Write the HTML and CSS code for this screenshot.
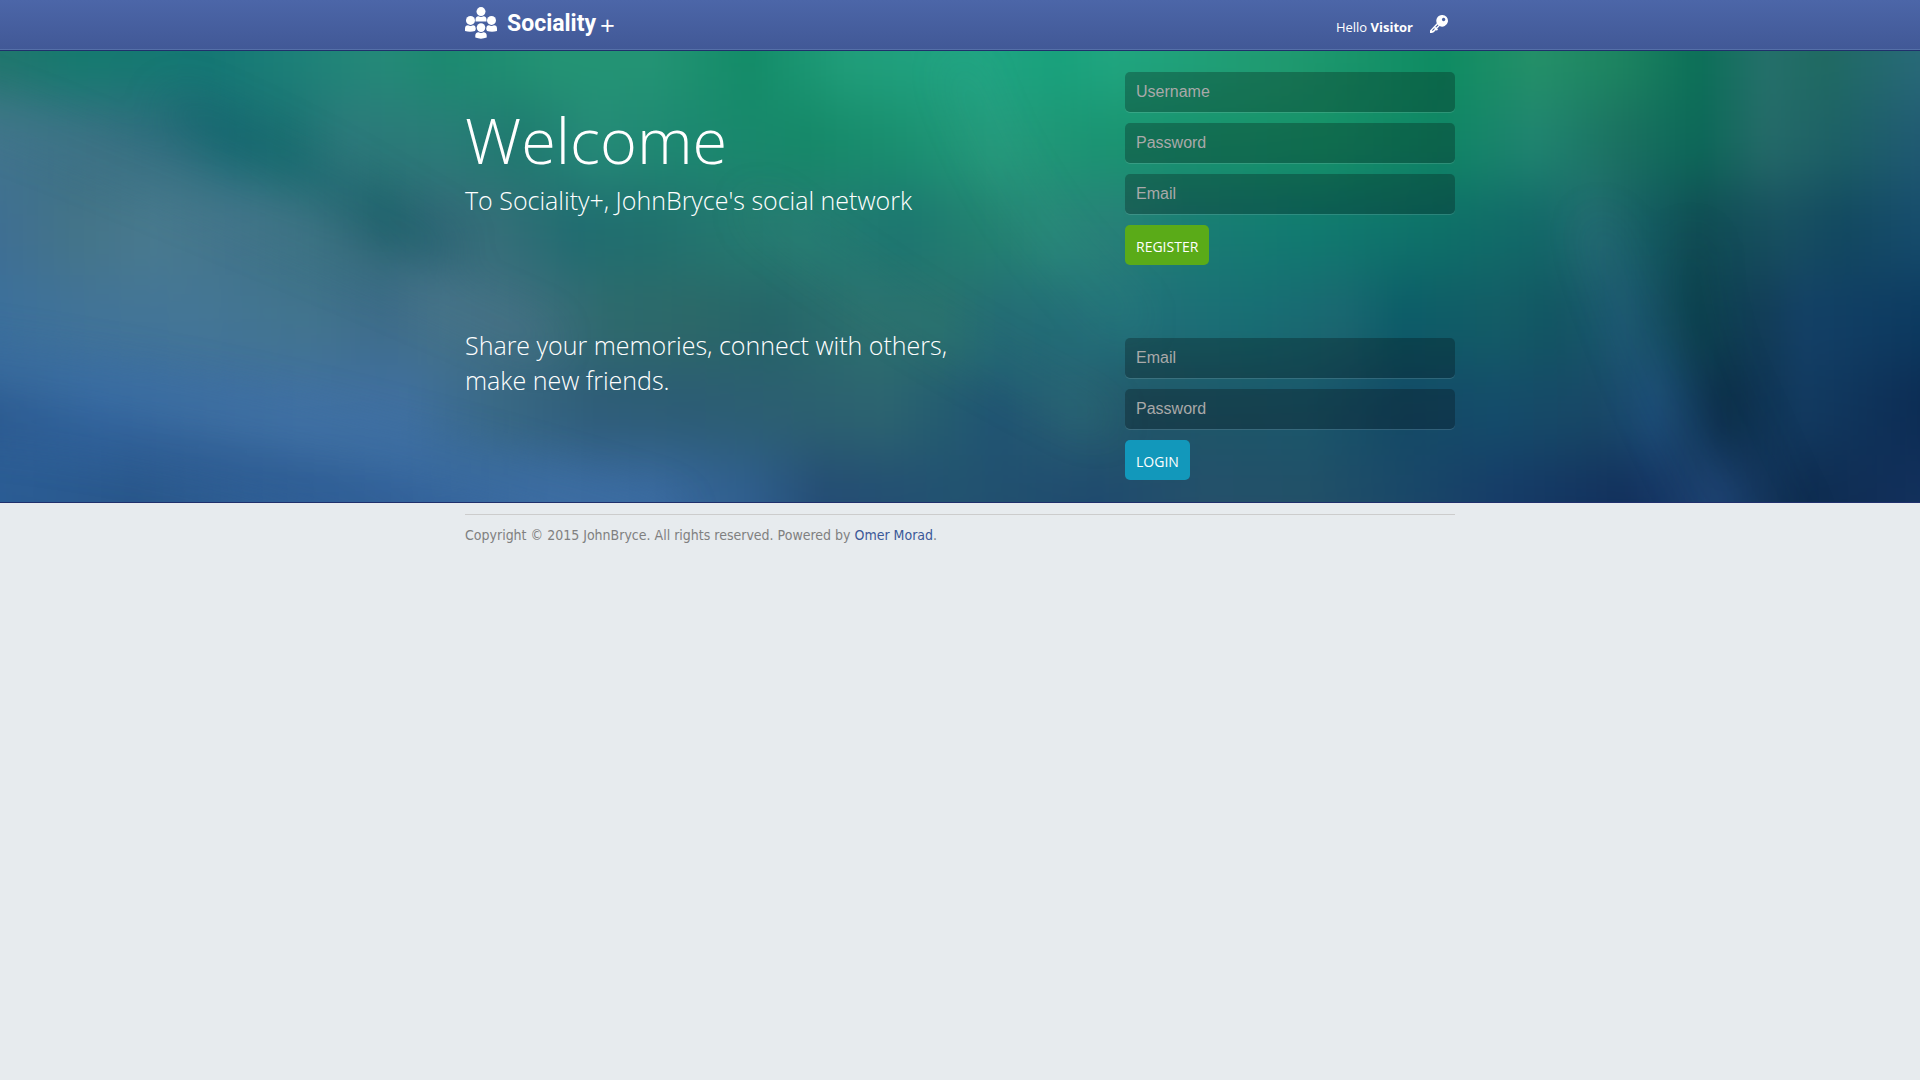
FILE: index.html
```html
<!DOCTYPE html>
<html lang="en">
<head>
<meta charset="utf-8">
<meta name="viewport" content="width=device-width, initial-scale=1">
<title>Sociality+</title>
<link rel="stylesheet" href="styles.css">
</head>
<body>
<header class="topbar">
  <div class="container topbar-inner">
    <a class="brand" href="#">
      <svg class="brand-icon" viewBox="0 0 32 32" aria-hidden="true">
        <circle cx="16" cy="4.600" r="4.500"/>
        <path d="M10.500 14.500V12.500Q10.500 9.500 13.500 9.300Q16 10.800 18.500 9.300Q21.500 9.500 21.500 12.500V14.500Z"/>
        <circle cx="5.500" cy="13.400" r="4.500"/>
        <path d="M0 23V21.500Q0 18.300 3 18.200Q5.500 19.600 8 18.200Q9.500 18.300 10.300 19.500Q11.500 22 10 24Q5 25.600 0 24Z"/>
        <circle cx="26.500" cy="13.400" r="4.500"/>
        <path d="M32 23V21.500Q32 18.300 29 18.200Q26.500 19.600 24 18.200Q22.500 18.300 21.700 19.500Q20.500 22 22 24Q27 25.600 32 24Z"/>
        <circle cx="16" cy="20.600" r="4.300"/>
        <path d="M10.300 30.500V28.500Q10.300 25.500 13.500 25.200Q16 26.800 18.500 25.200Q21.700 25.500 21.700 28.500V30.500Q16 32.800 10.300 30.500Z"/>
      </svg>
      <span class="brand-name">Sociality</span>
      <span class="brand-plus">+</span>
    </a>
    <div class="account">
      <span>Hello <b>Visitor</b></span>
      <a class="key" href="#login" aria-label="Log in">
        <svg viewBox="0 0 18 18" aria-hidden="true">
          <path fill-rule="evenodd" d="M12 0A5.800 5.800 0 1 1 9.600 11L4.800 16.200Q3.500 18 1.500 18H0V15.400L6.800 8.200A5.800 5.800 0 0 1 12 0ZM13.600 2.800A1.700 1.700 0 1 0 13.610 2.800ZM7.700 9.500L2 15.300L2.700 16L8.500 10.200Z"/>
          <path d="M5 11.500L8 14.500L6.800 15.700L4 13Z"/>
        </svg>
      </a>
    </div>
  </div>
</header>

<main class="hero">
  <svg class="backdrop" viewBox="0 51 1920 451" preserveAspectRatio="none" aria-hidden="true">
    <defs>
      <filter id="soft" filterUnits="userSpaceOnUse" x="-200" y="-200" width="2320" height="1000" color-interpolation-filters="sRGB"><feGaussianBlur stdDeviation="8 30"/></filter>
      <filter id="streak" filterUnits="userSpaceOnUse" x="-200" y="-200" width="2320" height="1000" color-interpolation-filters="sRGB"><feGaussianBlur stdDeviation="20"/></filter>
      <linearGradient id="r1" gradientUnits="userSpaceOnUse" x1="0" y1="0" x2="1920" y2="0">
        <stop offset="0" stop-color="#1f766c"/><stop offset=".04" stop-color="#147a6e"/><stop offset=".11" stop-color="#147874"/><stop offset=".15" stop-color="#1c8078"/><stop offset=".2" stop-color="#248a78"/><stop offset=".23" stop-color="#1b8a70"/><stop offset=".29" stop-color="#239474"/><stop offset=".34" stop-color="#239474"/><stop offset=".39" stop-color="#138c68"/><stop offset=".44" stop-color="#209e7a"/><stop offset=".51" stop-color="#20a583"/><stop offset=".55" stop-color="#18a27c"/><stop offset=".58" stop-color="#20a680"/><stop offset=".67" stop-color="#209a70"/><stop offset=".75" stop-color="#0e8c62"/><stop offset=".8" stop-color="#249068"/><stop offset=".845" stop-color="#1c8460"/><stop offset=".885" stop-color="#0c7058"/><stop offset=".92" stop-color="#24706a"/><stop offset=".95" stop-color="#1f6a62"/><stop offset="1" stop-color="#286a78"/>
      </linearGradient>
      <linearGradient id="r2" gradientUnits="userSpaceOnUse" x1="0" y1="0" x2="1920" y2="0">
        <stop offset="0" stop-color="#41748c"/><stop offset=".05" stop-color="#386f82"/><stop offset=".09" stop-color="#2d6c7c"/><stop offset=".12" stop-color="#1c6c74"/><stop offset=".15" stop-color="#1c7072"/><stop offset=".18" stop-color="#2c787a"/><stop offset=".23" stop-color="#2a7c78"/><stop offset=".27" stop-color="#1f7a70"/><stop offset=".31" stop-color="#258a78"/><stop offset=".36" stop-color="#1c8870"/><stop offset=".42" stop-color="#158868"/><stop offset=".47" stop-color="#1a9070"/><stop offset=".52" stop-color="#259a7c"/><stop offset=".57" stop-color="#1a9472"/><stop offset=".69" stop-color="#159268"/><stop offset=".75" stop-color="#0f8565"/><stop offset=".8" stop-color="#208470"/><stop offset=".845" stop-color="#1a7060"/><stop offset=".885" stop-color="#0c6858"/><stop offset=".92" stop-color="#246a68"/><stop offset=".96" stop-color="#1c6066"/><stop offset="1" stop-color="#205a72"/>
      </linearGradient>
      <linearGradient id="r3" gradientUnits="userSpaceOnUse" x1="0" y1="0" x2="1920" y2="0">
        <stop offset="0" stop-color="#3f6f92"/><stop offset=".04" stop-color="#447488"/><stop offset=".08" stop-color="#497a8e"/><stop offset=".12" stop-color="#42748a"/><stop offset=".16" stop-color="#387080"/><stop offset=".2" stop-color="#286470"/><stop offset=".23" stop-color="#346878"/><stop offset=".26" stop-color="#346e78"/><stop offset=".3" stop-color="#206c70"/><stop offset=".34" stop-color="#20706e"/><stop offset=".39" stop-color="#257a70"/><stop offset=".42" stop-color="#267c72"/><stop offset=".47" stop-color="#1c7670"/><stop offset=".51" stop-color="#228070"/><stop offset=".55" stop-color="#288678"/><stop offset=".58" stop-color="#288078"/><stop offset=".62" stop-color="#1a7c74"/><stop offset=".68" stop-color="#107a70"/><stop offset=".75" stop-color="#0e7068"/><stop offset=".8" stop-color="#126868"/><stop offset=".83" stop-color="#226a70"/><stop offset=".86" stop-color="#145a60"/><stop offset=".885" stop-color="#104c54"/><stop offset=".93" stop-color="#174f60"/><stop offset=".96" stop-color="#124860"/><stop offset="1" stop-color="#164c6c"/>
      </linearGradient>
      <linearGradient id="r4" gradientUnits="userSpaceOnUse" x1="0" y1="0" x2="1920" y2="0">
        <stop offset="0" stop-color="#3c709c"/><stop offset=".05" stop-color="#427498"/><stop offset=".1" stop-color="#447696"/><stop offset=".16" stop-color="#42748e"/><stop offset=".2" stop-color="#3e6c8a"/><stop offset=".23" stop-color="#447288"/><stop offset=".27" stop-color="#406e80"/><stop offset=".32" stop-color="#2e6a6c"/><stop offset=".36" stop-color="#2c6868"/><stop offset=".4" stop-color="#256468"/><stop offset=".45" stop-color="#2c706e"/><stop offset=".49" stop-color="#2a706e"/><stop offset=".52" stop-color="#246c74"/><stop offset=".59" stop-color="#22707a"/><stop offset=".65" stop-color="#186e74"/><stop offset=".7" stop-color="#1a6670"/><stop offset=".73" stop-color="#0c5c68"/><stop offset=".78" stop-color="#135c66"/><stop offset=".81" stop-color="#125562"/><stop offset=".845" stop-color="#1c5870"/><stop offset=".885" stop-color="#0d4350"/><stop offset=".92" stop-color="#123c58"/><stop offset=".94" stop-color="#134066"/><stop offset="1" stop-color="#0c3a60"/>
      </linearGradient>
      <linearGradient id="r5" gradientUnits="userSpaceOnUse" x1="0" y1="0" x2="1920" y2="0">
        <stop offset="0" stop-color="#2f5f94"/><stop offset=".05" stop-color="#3568a0"/><stop offset=".1" stop-color="#3b6ca0"/><stop offset=".16" stop-color="#4070a2"/><stop offset=".21" stop-color="#4070a0"/><stop offset=".26" stop-color="#386884"/><stop offset=".31" stop-color="#2e5c78"/><stop offset=".36" stop-color="#2c5c74"/><stop offset=".42" stop-color="#2c6070"/><stop offset=".46" stop-color="#2c6470"/><stop offset=".49" stop-color="#245c70"/><stop offset=".52" stop-color="#205472"/><stop offset=".56" stop-color="#285f72"/><stop offset=".6" stop-color="#205668"/><stop offset=".68" stop-color="#1a566a"/><stop offset=".73" stop-color="#144a66"/><stop offset=".78" stop-color="#144c6a"/><stop offset=".83" stop-color="#184866"/><stop offset=".862" stop-color="#1c4c76"/><stop offset=".898" stop-color="#0c2e4a"/><stop offset=".94" stop-color="#123a60"/><stop offset="1" stop-color="#0c2c54"/>
      </linearGradient>
      <linearGradient id="r6" gradientUnits="userSpaceOnUse" x1="0" y1="0" x2="1920" y2="0">
        <stop offset="0" stop-color="#2a5c94"/><stop offset=".07" stop-color="#28568a"/><stop offset=".13" stop-color="#2e5e94"/><stop offset=".21" stop-color="#34649c"/><stop offset=".29" stop-color="#3c6ca2"/><stop offset=".34" stop-color="#3a6aa0"/><stop offset=".39" stop-color="#2f5e8e"/><stop offset=".43" stop-color="#244c74"/><stop offset=".5" stop-color="#225270"/><stop offset=".57" stop-color="#1f4a6e"/><stop offset=".63" stop-color="#24506a"/><stop offset=".68" stop-color="#225068"/><stop offset=".73" stop-color="#1a4868"/><stop offset=".78" stop-color="#163c68"/><stop offset=".845" stop-color="#12305c"/><stop offset=".895" stop-color="#1c4070"/><stop offset=".94" stop-color="#0e2c50"/><stop offset="1" stop-color="#12305c"/>
      </linearGradient>
    </defs>
    <g filter="url(#soft)">
      <rect x="-80" y="-80" width="2080" height="180" fill="url(#r1)"/>
      <rect x="-80" y="100" width="2080" height="85" fill="url(#r2)"/>
      <rect x="-80" y="185" width="2080" height="90" fill="url(#r3)"/>
      <rect x="-80" y="275" width="2080" height="90" fill="url(#r4)"/>
      <rect x="-80" y="365" width="2080" height="90" fill="url(#r5)"/>
      <rect x="-80" y="455" width="2080" height="180" fill="url(#r6)"/>
    </g>
    <g filter="url(#streak)" fill="none" stroke-linecap="round">
      <path d="M180 110Q300 160 440 245" stroke="#085860" stroke-width="34" stroke-opacity=".28"/>
      <path d="M-40 100Q150 170 540 340" stroke="#5c8496" stroke-width="30" stroke-opacity=".2"/>
      <path d="M-40 360Q260 400 660 520" stroke="#4074aa" stroke-width="36" stroke-opacity=".35"/>
      <path d="M-40 420Q200 440 440 530" stroke="#24508a" stroke-width="28" stroke-opacity=".3"/>
      <path d="M960 70Q1010 220 1130 320" stroke="#34a088" stroke-width="26" stroke-opacity=".14"/>
      <path d="M760 210Q900 320 1100 420" stroke="#2c8078" stroke-width="24" stroke-opacity=".2"/>
      <path d="M1600 230Q1620 300 1650 370T1730 530" stroke="#28608c" stroke-width="30" stroke-opacity=".12"/>
      <path d="M1690 250Q1690 310 1720 380T1790 530" stroke="#042c38" stroke-width="26" stroke-opacity=".16"/>
    </g>
  </svg>

  <div class="container hero-inner">
    <div class="copy">
      <section class="intro">
        <h1>Welcome</h1>
        <p>To Sociality+, JohnBryce's social network</p>
      </section>
      <p>Share your memories, connect with others,<br>make new friends.</p>
    </div>
    <div class="forms">
      <form class="form" action="#">
        <input type="text" placeholder="Username" aria-label="Username">
        <input type="password" placeholder="Password" aria-label="Password">
        <input type="email" placeholder="Email" aria-label="Email">
        <button class="btn btn-register" type="submit">REGISTER</button>
      </form>
      <form class="form" id="login" action="#">
        <input type="email" placeholder="Email" aria-label="Email">
        <input type="password" placeholder="Password" aria-label="Password">
        <button class="btn btn-login" type="submit">LOGIN</button>
      </form>
    </div>
  </div>
</main>

<footer class="container footer">
  <p>Copyright © 2015 JohnBryce. All rights reserved. Powered by <a href="#">Omer Morad</a>.</p>
</footer>
</body>
</html>
```

FILE: styles.css
```css
* { box-sizing: border-box; }

body {
  margin: 0;
  background: #e7ebee;
  color: #808080;
  font: 14px/20px "DejaVu Sans Condensed", "Noto Sans", sans-serif;
}

h1, p { margin: 0; }

a { color: #3b5998; text-decoration: none; }

.container {
  width: 100%;
  max-width: 990px;
  margin: 0 auto;
}

.topbar {
  background: linear-gradient(#4c66a8, #415896);
  border-bottom: 1px solid #20306c;
  box-shadow: inset 0 -1px #5570a8;
}

.topbar-inner {
  display: flex;
  justify-content: space-between;
  align-items: center;
  height: 50px;
}

.brand, .account { display: flex; align-items: center; color: #fff; }

.brand-icon { width: 32px; height: 32px; margin: 0 10px 4px 0; fill: #fff; }

.brand-name {
  font: bold 23px/40px Roboto, "Liberation Sans", sans-serif;
  padding-bottom: 2px;
}

.brand-plus {
  margin-left: 4px;
  font: 26px/40px "Open Sans", sans-serif;
}

.account {
  gap: 17px;
  padding: 4px 7px 0 0;
  font: 13px/20px "Open Sans", sans-serif;
}

.key { display: block; height: 18px; margin-bottom: 6px; }
.key svg { display: block; width: 18px; height: 18px; fill: #fff; }

.hero {
  position: relative;
  overflow: hidden;
  background: #1f6c72;
  border-bottom: 1px solid #20306c;
}

.backdrop { position: absolute; inset: 0; width: 100%; height: 100%; }

.hero-inner {
  position: relative;
  display: grid;
  grid-template-columns: 1fr 330px;
  padding: 21px 0 22px;
  color: #fff;
}

.copy {
  display: flex;
  flex-direction: column;
  gap: 110px;
  padding-top: 25px;
  font: 300 25px/35px "Open Sans", sans-serif;
}

.intro h1 {
  font-size: 63px;
  font-weight: 300;
  line-height: 86px;
}

.forms {
  display: flex;
  flex-direction: column;
  gap: 73px;
}

.form {
  display: flex;
  flex-direction: column;
  align-items: flex-start;
  gap: 11px;
}

.form input {
  width: 100%;
  height: 40px;
  padding: 0 11px;
  border: 0;
  border-radius: 5px;
  background: rgba(0, 0, 0, .25);
  box-shadow: 0 1px rgba(255, 255, 255, .12);
  color: #fff;
  font: 16px "Liberation Sans", Arial, sans-serif;
}

.form input::placeholder { color: #a9a9a9; opacity: 1; }

.btn {
  height: 40px;
  padding: 2px 11px 0;
  border: 0;
  border-radius: 5px;
  color: #fff;
  font: 14px "Open Sans", sans-serif;
}

.btn-register { background: #5aab18; }
.btn-login { background: #1298bb; }

.footer { padding-top: 11px; }
.footer p { padding-top: 10px; border-top: 1px solid #ccc; }
```
